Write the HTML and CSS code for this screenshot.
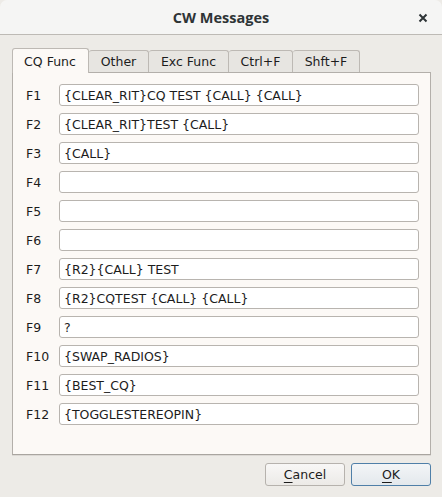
FILE: index.html
```html
<!DOCTYPE html>
<html>
<head>
<meta charset="utf-8">
<link rel="stylesheet" href="styles.css">
</head>
<body>
<div class="window">
  <div class="titlebar">
    <span class="title">CW Messages</span>
    <span class="close"><svg width="10" height="10" viewBox="0 0 10 10"><path d="M1.5 1.5 L8.5 8.5 M8.5 1.5 L1.5 8.5" stroke="#2e3436" stroke-width="2" stroke-linecap="butt"/></svg></span>
  </div>
  <div class="content">
    <div class="tabs">
      <div class="tab active">CQ Func</div>
      <div class="tab">Other</div>
      <div class="tab">Exc Func</div>
      <div class="tab">Ctrl+F</div>
      <div class="tab">Shft+F</div>
    </div>
    <div class="panel">
      <div class="row"><span class="lbl">F1</span><div class="field">{CLEAR_RIT}CQ TEST {CALL} {CALL}</div></div>
      <div class="row"><span class="lbl">F2</span><div class="field">{CLEAR_RIT}TEST {CALL}</div></div>
      <div class="row"><span class="lbl">F3</span><div class="field">{CALL}</div></div>
      <div class="row"><span class="lbl">F4</span><div class="field"></div></div>
      <div class="row"><span class="lbl">F5</span><div class="field"></div></div>
      <div class="row"><span class="lbl">F6</span><div class="field"></div></div>
      <div class="row"><span class="lbl">F7</span><div class="field">{R2}{CALL} TEST</div></div>
      <div class="row"><span class="lbl">F8</span><div class="field">{R2}CQTEST {CALL} {CALL}</div></div>
      <div class="row"><span class="lbl">F9</span><div class="field">?</div></div>
      <div class="row"><span class="lbl">F10</span><div class="field">{SWAP_RADIOS}</div></div>
      <div class="row"><span class="lbl">F11</span><div class="field">{BEST_CQ}</div></div>
      <div class="row"><span class="lbl">F12</span><div class="field">{TOGGLESTEREOPIN}</div></div>
    </div>
    <div class="buttons">
      <div class="btn"><u>C</u>ancel</div>
      <div class="btn default"><u>O</u>K</div>
    </div>
  </div>
</div>
</body>
</html>
```
FILE: styles.css
```css
html, body {
  margin: 0;
  padding: 0;
  background: #edebe7;
}
body {
  width: 442px;
  height: 497px;
  overflow: hidden;
  font-family: "DejaVu Sans", sans-serif;
  font-size: 12.5px;
  color: #1c1c1c;
}
.window {
  width: 442px;
  height: 497px;
  display: flex;
  flex-direction: column;
  background: #edebe7;
  border-radius: 7px 7px 0 0;
}
.titlebar {
  height: 35px;
  box-sizing: border-box;
  border-bottom: 1px solid #bdbab5;
  background: #f5f5f4;
  border-radius: 7px 7px 0 0;
  display: flex;
  align-items: center;
  justify-content: center;
  position: relative;
}
.title {
  font-family: "Open Sans", sans-serif;
  font-weight: bold;
  font-size: 14.5px;
  color: #2e3436;
  margin-top: 0;
}
.close {
  position: absolute;
  right: 14px;
  top: 13px;
  width: 10px;
  height: 10px;
  display: flex;
}
.content {
  padding: 13px 11px 0 12px;
  display: flex;
  flex-direction: column;
}
.tabs {
  display: flex;
  align-items: flex-end;
  height: 24px;
  position: relative;
  z-index: 1;
}
.tab {
  box-sizing: border-box;
  height: 22px;
  border: 1px solid #bdb9b4;
  border-bottom: none;
  border-left: none;
  border-radius: 3px 3px 0 0;
  background: #e7e5e1;
  padding: 0 11px;
  display: flex;
  align-items: center;
  justify-content: center;
  color: #1c1c1c;
}
.tab.active {
  height: 25px;
  border-left: 1px solid #bdb9b4;
  background: #fcf9f6;
  padding: 0 11px 0 10px;
  margin-bottom: -1px;
  width: 77px;
}
.tab:nth-child(2) { width: 60px; }
.tab:nth-child(3) { width: 80px; }
.tab:nth-child(4) { width: 64px; }
.tab:nth-child(5) { width: 67px; }
.panel {
  box-sizing: border-box;
  height: 383px;
  border: 1px solid #b3afaa;
  border-bottom-color: #a9a5a0;
  background: #fcf9f6;
  padding: 11px 11px 0 13px;
  display: flex;
  flex-direction: column;
  gap: 7px;
  box-shadow: 0 1px 0 #dcd9d5;
}
.row {
  display: flex;
  align-items: center;
  height: 22px;
}
.lbl {
  width: 33px;
  flex: none;
}
.field {
  flex: 1;
  box-sizing: border-box;
  height: 22px;
  border: 1px solid #b8b4af;
  border-radius: 3px;
  background: #ffffff;
  padding: 0 4px;
  display: flex;
  align-items: center;
  white-space: nowrap;
  color: #1c1c1c;
}
.buttons {
  display: flex;
  justify-content: flex-end;
  gap: 6px;
  margin-top: 8px;
}
.btn {
  box-sizing: border-box;
  width: 80px;
  height: 23px;
  border: 1px solid #b6b2ad;
  border-radius: 3px;
  background: linear-gradient(#f8f7f6, #eceae7);
  display: flex;
  align-items: center;
  justify-content: center;
  color: #1c1c1c;
}
.btn u {
  text-decoration-thickness: 1px;
  text-underline-offset: 3px;
}
.btn.default {
  border-color: #4f7fa8;
  background: linear-gradient(#f3f5f7, #e3e8ec);
}
```
